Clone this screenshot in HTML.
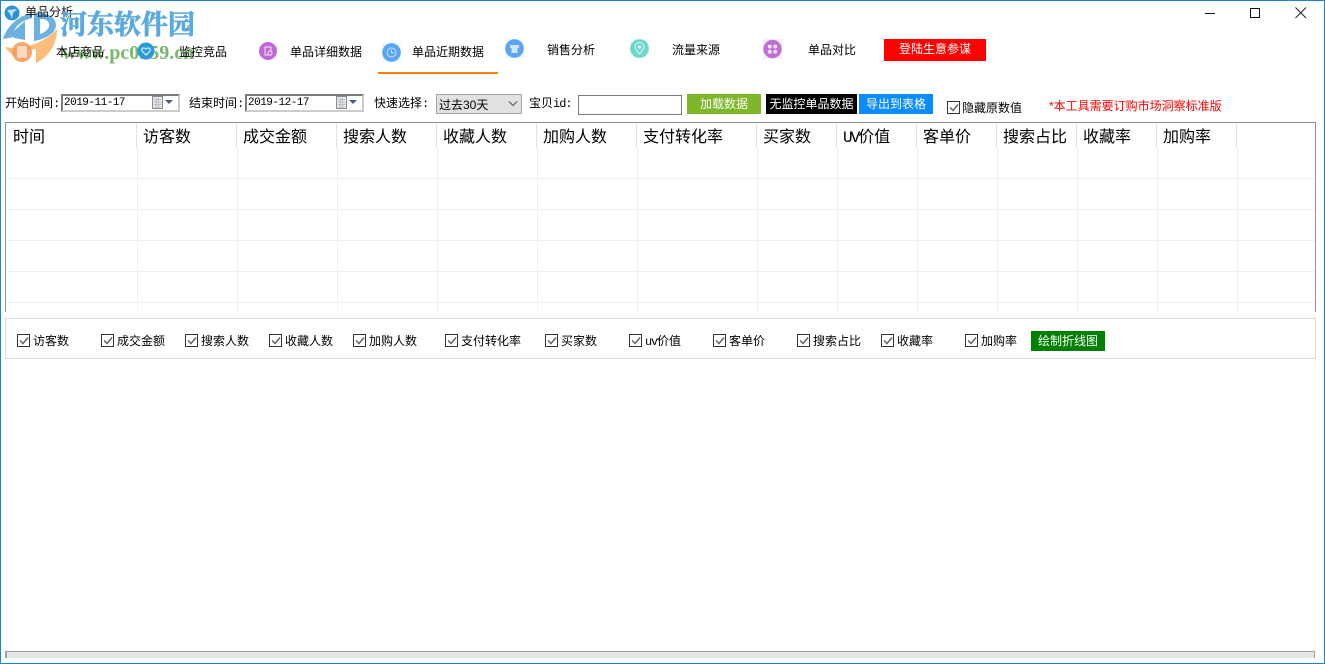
<!DOCTYPE html>
<html lang="zh">
<head>
<meta charset="utf-8">
<style>
html,body{margin:0;padding:0;background:#fff;}
#w{position:relative;width:1325px;height:664px;overflow:hidden;background:#fff;font-family:"Liberation Sans","WenQuanYi Zen Hei","Noto Sans CJK SC",sans-serif;font-size:12px;color:#000;}
#w div,#w svg{position:absolute;}
.m{font-family:"Liberation Mono",monospace;}
.t{white-space:nowrap;line-height:14px;}
.b{white-space:nowrap;text-align:center;color:#fff;}
.h{font-size:16px;line-height:18px;top:129px;white-space:nowrap;}
.v{width:1px;background:#efefef;}
.vh{width:1px;background:#e2e2e2;}
.r{height:1px;background:#efefef;left:7px;width:1308px;}
.c{width:11px;height:11px;border:1px solid #333;background:#fff;top:334px;}
.c svg{left:1px;top:1px;}
.l{top:334px;}
.date{border:2px solid;border-color:#7c7c7c #ccc #ccc #7c7c7c;box-sizing:border-box;height:18px;background:#fff;top:94px;}
</style>
</head>
<body>
<div id="w">
<!-- window frame -->
<div style="left:0;top:0;width:1325px;height:1px;background:#1e82d2"></div>
<div style="left:0;top:0;width:1px;height:664px;background:#1e82d2"></div>
<div style="left:1324px;top:0;width:1px;height:664px;background:#1e82d2"></div>
<div style="left:0;top:663px;width:1325px;height:1px;background:#1e82d2"></div>

<!-- logo watermark -->
<svg style="left:0;top:0;opacity:.9" width="62" height="66" viewBox="0 0 62 66">
<path d="M3 39 C7 26 18 16 32 13 L32 18 C24 20 17 24 14 31 L14 37 Z" fill="#5ba9e0"/>
<path d="M14 38 L14 31 L25 21 L25 40 Z" fill="#5ba9e0"/>
<path d="M34 13 C47 11 56 18 56 25 C56 33 46 39 34 41 Z M40 19 L40 34 C46 32 50 28 49 24 C48 20 45 19 40 19 Z" fill="#5ba9e0"/>
<path d="M5 47 C20 50 42 45 57 29 C57 46 47 58 36 63 L36 49 L25 50 L25 60 C15 58 9 53 5 47 Z" fill="#fbb66d"/>
<circle cx="22" cy="52" r="10" fill="#f68d3f" opacity=".85"/>
<rect x="17" y="46" width="10" height="12" rx="2" fill="#fbd6bb"/>
</svg>
<svg style="left:4px;top:5px" width="16" height="16" viewBox="0 0 16 16">
<circle cx="8" cy="8" r="7.5" fill="#2b93cf"/>
<path d="M3 5 L13 4 L9 8 L8 14 L6 9 Z" fill="#bfe3f5"/>
</svg>
<div class="t" style="left:25px;top:5px;color:#111">单品分析</div>
<div class="t" style="left:60px;top:8px;font-family:'Liberation Serif','Noto Serif CJK SC',serif;font-weight:700;font-size:27px;line-height:34px;color:#5ba9e0;-webkit-text-stroke:.7px #5ba9e0">河东软件园</div>
<div class="t" style="left:62px;top:42px;font-family:'Liberation Serif',serif;font-weight:700;font-size:20px;line-height:22px;color:#76b96b">www.pc0359.cn</div>

<!-- window controls -->
<div style="left:1205px;top:13px;width:10px;height:1px;background:#111"></div>
<div style="left:1250px;top:8px;width:8px;height:8px;border:1px solid #111"></div>
<svg style="left:1295px;top:7px" width="12" height="12" viewBox="0 0 12 12"><path d="M.5 .5 L11 11 M11 .5 L.5 11" stroke="#222" stroke-width="1" fill="none"/></svg>

<!-- nav -->
<div class="t" style="left:56px;top:45px">本店商品</div>
<svg style="left:137px;top:42px" width="18" height="18" viewBox="0 0 18 18">
<circle cx="9" cy="9" r="8.5" fill="#2a9bd8"/><path d="M9 13 L5 9 C4 6 7 5 9 7 C11 5 14 6 13 9 Z" fill="none" stroke="#d8f0fb" stroke-width="1.2"/>
</svg>
<div class="t" style="left:179px;top:45px">监控竞品</div>
<svg style="left:259px;top:42px" width="18" height="18" viewBox="0 0 18 18">
<circle cx="9" cy="9" r="9" fill="#c069d6"/><path d="M6 5 H12 V13 H6 Z" fill="none" stroke="#f6e4fb" stroke-width="1"/><circle cx="11" cy="11" r="2" fill="#c069d6" stroke="#f6e4fb"/>
</svg>
<div class="t" style="left:290px;top:45px">单品详细数据</div>
<svg style="left:382px;top:43px" width="19" height="19" viewBox="0 0 19 19">
<rect x="0" y="0" width="19" height="19" fill="#eef8fd"/>
<circle cx="9.5" cy="9.5" r="9.3" fill="#5aa5f3"/><circle cx="9.5" cy="9.5" r="4.5" fill="none" stroke="#cfe5fc"/><path d="M9.5 7 V9.8 H12" fill="none" stroke="#cfe5fc"/>
</svg>
<div class="t" style="left:412px;top:45px">单品近期数据</div>
<div style="left:378px;top:72px;width:120px;height:2px;background:#ff8000"></div>
<svg style="left:505px;top:39px" width="19" height="19" viewBox="0 0 19 19">
<rect x="0" y="0" width="19" height="19" fill="#eef8fd"/>
<circle cx="9.5" cy="9.5" r="9.3" fill="#5aa5f3"/><path d="M5 6 H14 L14 9 H12.5 V14 H6.5 V9 H5 Z" fill="#cfe5fc"/>
</svg>
<div class="t" style="left:547px;top:43px">销售分析</div>
<svg style="left:630px;top:39px" width="19" height="19" viewBox="0 0 19 19">
<rect x="0" y="0" width="19" height="19" fill="#eefafa"/>
<circle cx="9.5" cy="9.5" r="9.3" fill="#6dd8ca"/><path d="M9.5 15 C6 11 5 9.500 5 8 A4.5 4.5 0 0 1 14 8 C14 9.5 13 11 9.5 15 Z" fill="none" stroke="#dff8f4"/><circle cx="9.5" cy="8" r="1.6" fill="#dff8f4"/>
</svg>
<div class="t" style="left:672px;top:43px">流量来源</div>
<svg style="left:763px;top:39px" width="19" height="20" viewBox="0 0 19 20">
<rect x="0" y="0" width="19" height="20" fill="#f8eefb"/>
<circle cx="9.5" cy="10" r="9.2" fill="#bd6fd6"/><g fill="#f3def9"><circle cx="6.8" cy="7.5" r="2"/><circle cx="12.2" cy="7.5" r="2"/><circle cx="6.8" cy="12.8" r="2"/><circle cx="12.2" cy="12.8" r="2"/></g>
</svg>
<div class="t" style="left:808px;top:43px">单品对比</div>
<div class="b" style="left:884px;top:39px;width:102px;height:22px;line-height:21px;background:#f00">登陆生意参谋</div>

<!-- toolbar -->
<div class="t" style="left:5px;top:96px">开始时间<span class="m">:</span></div>
<div class="date" style="left:61px;width:119px"></div>
<div class="t m" style="left:64px;top:96px;font-size:11px;letter-spacing:-.5px">2019-11-17</div>
<svg style="left:152px;top:96px" width="26" height="14" viewBox="0 0 26 14">
<rect x=".5" y=".5" width="10" height="12" fill="#e8eaee" stroke="#8a8a8a"/><path d="M2 3.5H9M2 6H9M2 8.5H9M2 11H9M4 2V12M6.500 2V12" stroke="#b0b4bc" stroke-width=".7"/><path d="M13 4 H21 L17 8 Z" fill="#4d6185"/>
</svg>
<div class="t" style="left:189px;top:96px">结束时间<span class="m">:</span></div>
<div class="date" style="left:245px;width:119px"></div>
<div class="t m" style="left:248px;top:96px;font-size:11px;letter-spacing:-.5px">2019-12-17</div>
<svg style="left:336px;top:96px" width="26" height="14" viewBox="0 0 26 14">
<rect x=".5" y=".5" width="10" height="12" fill="#e8eaee" stroke="#8a8a8a"/><path d="M2 3.5H9M2 6H9M2 8.5H9M2 11H9M4 2V12M6.500 2V12" stroke="#b0b4bc" stroke-width=".7"/><path d="M13 4 H21 L17 8 Z" fill="#4d6185"/>
</svg>
<div class="t" style="left:374px;top:96px">快速选择<span class="m">:</span></div>
<div style="left:436px;top:94px;width:84px;height:18px;border:1px solid #a6a6a6;background:#e1e1e1"></div>
<div class="t" style="left:439px;top:98px">过去30天</div>
<svg style="left:508px;top:100px" width="10" height="8" viewBox="0 0 10 8"><path d="M1 1.5 L5 5.5 L9 1.5" fill="none" stroke="#555" stroke-width="1.1"/></svg>
<div class="t" style="left:529px;top:96px">宝贝<span class="m" style="letter-spacing:-1px">id:</span></div>
<div style="left:578px;top:95px;width:102px;height:18px;border:1px solid #7a7a7a;background:#fff"></div>
<div class="b" style="left:687px;top:94px;width:74px;height:20px;line-height:20px;background:#7fb72a">加载数据</div>
<div class="b" style="left:766px;top:94px;width:91px;height:20px;line-height:20px;background:#000">无监控单品数据</div>
<div class="b" style="left:859px;top:94px;width:74px;height:20px;line-height:20px;background:#0a8cff">导出到表格</div>
<div class="c" style="left:947px;top:101px"><svg width="10" height="10" viewBox="0 0 10 10"><path d="M1 4.500 L4 7.500 L9 1.500" fill="none" stroke="#666" stroke-width="1.5"/></svg></div>
<div class="t" style="left:962px;top:101px">隐藏原数值</div>
<div class="t" style="left:1049px;top:99px;color:#f00">*本工具需要订购市场洞察标准版</div>

<!-- table -->
<div style="left:5px;top:122px;width:1311px;height:1px;background:#8e8e9c"></div>
<div style="left:5px;top:122px;width:1px;height:190px;background:#8e8e9c"></div>
<div style="left:1315px;top:122px;width:1px;height:190px;background:#8e8e9c"></div>
<div class="r" style="top:178px"></div>
<div class="r" style="top:209px"></div>
<div class="r" style="top:240px"></div>
<div class="r" style="top:271px"></div>
<div class="r" style="top:302px"></div>
<div class="vh" style="left:136px;top:124px;height:24px"></div><div class="v" style="left:137px;top:148px;height:163px"></div>
<div class="vh" style="left:236px;top:124px;height:24px"></div><div class="v" style="left:237px;top:148px;height:163px"></div>
<div class="vh" style="left:336px;top:124px;height:24px"></div><div class="v" style="left:337px;top:148px;height:163px"></div>
<div class="vh" style="left:436px;top:124px;height:24px"></div><div class="v" style="left:437px;top:148px;height:163px"></div>
<div class="vh" style="left:536px;top:124px;height:24px"></div><div class="v" style="left:537px;top:148px;height:163px"></div>
<div class="vh" style="left:636px;top:124px;height:24px"></div><div class="v" style="left:637px;top:148px;height:163px"></div>
<div class="vh" style="left:756px;top:124px;height:24px"></div><div class="v" style="left:757px;top:148px;height:163px"></div>
<div class="vh" style="left:836px;top:124px;height:24px"></div><div class="v" style="left:837px;top:148px;height:163px"></div>
<div class="vh" style="left:916px;top:124px;height:24px"></div><div class="v" style="left:917px;top:148px;height:163px"></div>
<div class="vh" style="left:996px;top:124px;height:24px"></div><div class="v" style="left:997px;top:148px;height:163px"></div>
<div class="vh" style="left:1076px;top:124px;height:24px"></div><div class="v" style="left:1077px;top:148px;height:163px"></div>
<div class="vh" style="left:1156px;top:124px;height:24px"></div><div class="v" style="left:1157px;top:148px;height:163px"></div>
<div class="vh" style="left:1236px;top:124px;height:24px"></div><div class="v" style="left:1237px;top:148px;height:163px"></div>
<div class="h" style="left:13px">时间</div>
<div class="h" style="left:143px">访客数</div>
<div class="h" style="left:243px">成交金额</div>
<div class="h" style="left:343px">搜索人数</div>
<div class="h" style="left:443px">收藏人数</div>
<div class="h" style="left:543px">加购人数</div>
<div class="h" style="left:643px">支付转化率</div>
<div class="h" style="left:763px">买家数</div>
<div class="h" style="left:843px"><span class="m" style="letter-spacing:-2px">UV</span>价值</div>
<div class="h" style="left:923px">客单价</div>
<div class="h" style="left:1003px">搜索占比</div>
<div class="h" style="left:1083px">收藏率</div>
<div class="h" style="left:1163px">加购率</div>

<!-- checkbox panel -->
<div style="left:5px;top:318px;width:1309px;height:39px;border:1px solid #dcdcdc"></div>
<div class="c" style="left:17px"><svg width="10" height="10" viewBox="0 0 10 10"><path d="M1 4.500 L4 7.500 L9 1.500" fill="none" stroke="#666" stroke-width="1.5"/></svg></div><div class="t l" style="left:33px">访客数</div>
<div class="c" style="left:101px"><svg width="10" height="10" viewBox="0 0 10 10"><path d="M1 4.500 L4 7.500 L9 1.500" fill="none" stroke="#666" stroke-width="1.5"/></svg></div><div class="t l" style="left:117px">成交金额</div>
<div class="c" style="left:185px"><svg width="10" height="10" viewBox="0 0 10 10"><path d="M1 4.500 L4 7.500 L9 1.500" fill="none" stroke="#666" stroke-width="1.5"/></svg></div><div class="t l" style="left:201px">搜索人数</div>
<div class="c" style="left:269px"><svg width="10" height="10" viewBox="0 0 10 10"><path d="M1 4.500 L4 7.500 L9 1.500" fill="none" stroke="#666" stroke-width="1.5"/></svg></div><div class="t l" style="left:285px">收藏人数</div>
<div class="c" style="left:353px"><svg width="10" height="10" viewBox="0 0 10 10"><path d="M1 4.500 L4 7.500 L9 1.500" fill="none" stroke="#666" stroke-width="1.5"/></svg></div><div class="t l" style="left:369px">加购人数</div>
<div class="c" style="left:445px"><svg width="10" height="10" viewBox="0 0 10 10"><path d="M1 4.500 L4 7.500 L9 1.500" fill="none" stroke="#666" stroke-width="1.5"/></svg></div><div class="t l" style="left:461px">支付转化率</div>
<div class="c" style="left:545px"><svg width="10" height="10" viewBox="0 0 10 10"><path d="M1 4.500 L4 7.500 L9 1.500" fill="none" stroke="#666" stroke-width="1.5"/></svg></div><div class="t l" style="left:561px">买家数</div>
<div class="c" style="left:629px"><svg width="10" height="10" viewBox="0 0 10 10"><path d="M1 4.500 L4 7.500 L9 1.500" fill="none" stroke="#666" stroke-width="1.5"/></svg></div><div class="t l" style="left:645px"><span class="m" style="letter-spacing:-1.2px">uv</span>价值</div>
<div class="c" style="left:713px"><svg width="10" height="10" viewBox="0 0 10 10"><path d="M1 4.500 L4 7.500 L9 1.500" fill="none" stroke="#666" stroke-width="1.5"/></svg></div><div class="t l" style="left:729px">客单价</div>
<div class="c" style="left:797px"><svg width="10" height="10" viewBox="0 0 10 10"><path d="M1 4.500 L4 7.500 L9 1.500" fill="none" stroke="#666" stroke-width="1.5"/></svg></div><div class="t l" style="left:813px">搜索占比</div>
<div class="c" style="left:881px"><svg width="10" height="10" viewBox="0 0 10 10"><path d="M1 4.500 L4 7.500 L9 1.500" fill="none" stroke="#666" stroke-width="1.5"/></svg></div><div class="t l" style="left:897px">收藏率</div>
<div class="c" style="left:965px"><svg width="10" height="10" viewBox="0 0 10 10"><path d="M1 4.500 L4 7.500 L9 1.500" fill="none" stroke="#666" stroke-width="1.5"/></svg></div><div class="t l" style="left:981px">加购率</div>
<div class="b" style="left:1031px;top:331px;width:74px;height:20px;line-height:20px;background:#008000">绘制折线图</div>

<!-- scrollbar -->
<div style="left:5px;top:651px;width:1310px;height:7px;background:#e6e6e6"></div>
<div style="left:5px;top:651px;width:1310px;height:1px;background:#a0a0a0"></div>
<div style="left:5px;top:651px;width:2px;height:7px;background:#a0a0a0"></div>
<div style="left:1314px;top:651px;width:1px;height:7px;background:#a0a0a0"></div>
</div>
</body>
</html>
